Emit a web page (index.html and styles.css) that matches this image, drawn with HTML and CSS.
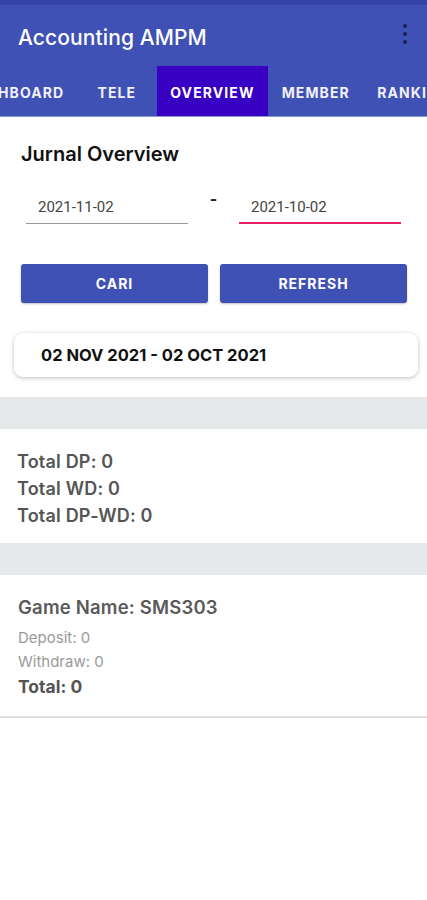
FILE: index.html
```html
<!DOCTYPE html>
<html>
<head>
<meta charset="utf-8">
<link rel="stylesheet" href="styles.css">
</head>
<body>
<div class="status"></div>
<header class="appbar">
  <div class="title">Accounting AMPM</div>
  <div class="menu"><span></span><span></span><span></span></div>
</header>
<nav class="tabs">
  <div class="tab t1">HBOARD</div>
  <div class="tab t2">TELE</div>
  <div class="tab active">OVERVIEW</div>
  <div class="tab t4">MEMBER</div>
  <div class="tab t5">RANKI</div>
</nav>
<main>
  <h1 class="heading">Jurnal Overview</h1>
  <div class="dates">
    <div class="field">2021-11-02</div>
    <div class="dash">-</div>
    <div class="field focus">2021-10-02</div>
  </div>
  <div class="buttons">
    <button class="btn">CARI</button>
    <button class="btn">REFRESH</button>
  </div>
  <div class="card">02 NOV 2021 - 02 OCT 2021</div>
  <div class="band"></div>
  <section class="totals">
    <div>Total DP: 0</div>
    <div>Total WD: 0</div>
    <div>Total DP-WD: 0</div>
  </section>
  <div class="band"></div>
  <section class="game">
    <div class="gname">Game Name: SMS303</div>
    <div class="small">Deposit: 0</div>
    <div class="small">Withdraw: 0</div>
    <div class="gtotal">Total: 0</div>
  </section>
</main>
</body>
</html>
```
FILE: styles.css
```css
* { box-sizing: border-box; }
html, body { margin: 0; padding: 0; background: #fff; }
body { width: 427px; height: 900px; font-family: Inter, "Noto Sans", sans-serif; overflow: hidden; }
.status { height: 5px; background: #3444a4; }
.appbar { height: 61px; background: #3f51b5; display: flex; align-items: center; justify-content: space-between; padding: 0 20px 0 18px; }
.title { color: #fff; font-size: 21px; font-weight: 500; margin-top: 3px; letter-spacing: 0.1px; }
.menu { display: flex; flex-direction: column; gap: 4px; margin-top: -4px; }
.menu span { width: 4px; height: 4px; border-radius: 50%; background: #1b1f4a; }
.tabs { height: 51px; background: #3f51b5; display: flex; border-bottom: 1px solid #8c96d0; overflow: hidden; }
.tab { color: #fff; font-size: 14px; font-weight: 700; letter-spacing: 1.1px; display: flex; align-items: center; white-space: nowrap; opacity: 0.92; padding-top: 2px; }
.t1 { width: 100px; margin-left: -2px; }
.t2 { width: 60px; }
.tab.active { background: #3700c2; width: 111px; justify-content: center; opacity: 1; }
.t4 { padding-left: 14px; width: 111px; }
.t5 { margin-left: -1px; }
main { display: flex; flex-direction: column; }
.heading { margin: 0; padding: 26px 0 0 21px; font-size: 20px; font-weight: 600; color: #111; line-height: 22px; }
.dates { display: flex; align-items: flex-start; padding: 20px 25px 0 26px; height: 99px; }
.field { width: 162px; height: 39px; border-bottom: 1.5px solid #9a9a9a; color: #444; font-family: Roboto, sans-serif; font-size: 15px; padding: 14px 0 0 12px; line-height: 16px; }
.field.focus { border-bottom: 2px solid #e91e63; }
.dash { width: 51px; text-align: center; color: #222; font-size: 16px; font-weight: 700; padding-top: 4px; }
.buttons { display: flex; gap: 12px; padding: 0 20px 0 21px; }
.btn { flex: 1; height: 39px; background: #3f51b5; color: #fff; border: 0; border-radius: 3px; font-family: Inter, sans-serif; font-size: 14px; font-weight: 700; letter-spacing: 1px; box-shadow: 0 1px 2px rgba(0,0,0,0.25); }
.card { margin: 30px 9px 0 14px; height: 44px; border-radius: 9px; background: #fff; box-shadow: 0 1px 4px rgba(0,0,0,0.25); font-size: 16.5px; font-weight: 700; color: #111; padding: 0 0 0 27px; display: flex; align-items: center; }
.band { height: 32px; background: #e6e9ea; }
.card + .band { margin-top: 20px; }
.totals { padding: 19px 17px 14px; color: #555; font-size: 18px; font-weight: 600; line-height: 27px; letter-spacing: 0.2px; }
.game { padding: 20px 18px 16px; border-bottom: 2px solid #e0e0e0; }
.gname { color: #5a5a5a; font-size: 18.5px; font-weight: 600; line-height: 24px; margin-bottom: 7px; letter-spacing: 0.2px; }
.small { color: #9a9a9a; font-size: 15px; line-height: 24px; }
.gtotal { color: #555; font-size: 17.5px; font-weight: 700; line-height: 26px; }
```
